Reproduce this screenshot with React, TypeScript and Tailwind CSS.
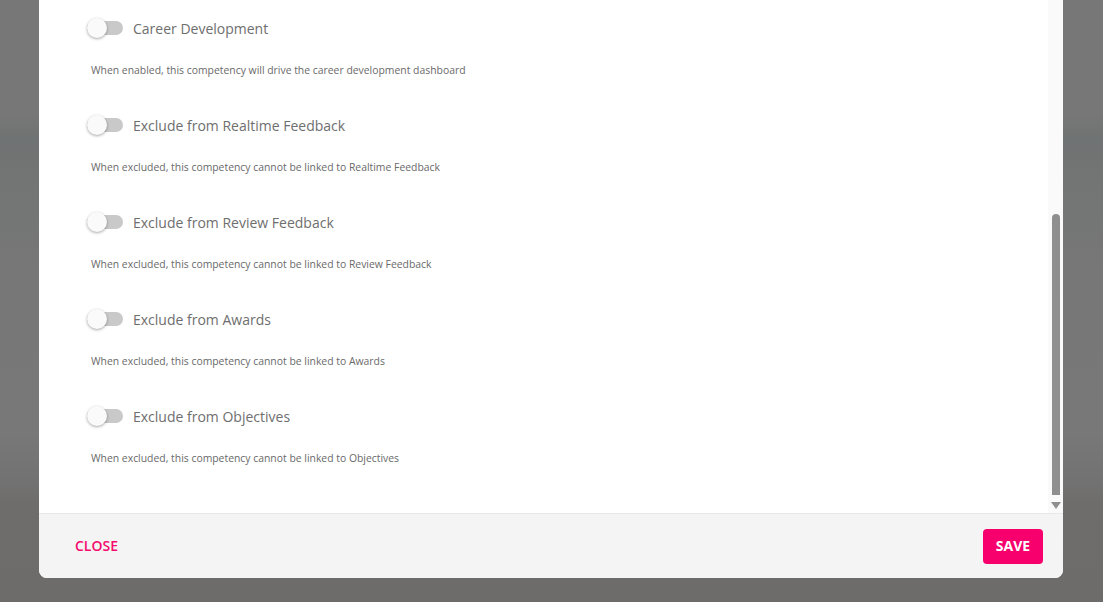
const settings = [
  {
    label: "Career Development",
    description: "When enabled, this competency will drive the career development dashboard",
  },
  {
    label: "Exclude from Realtime Feedback",
    description: "When excluded, this competency cannot be linked to Realtime Feedback",
  },
  {
    label: "Exclude from Review Feedback",
    description: "When excluded, this competency cannot be linked to Review Feedback",
  },
  {
    label: "Exclude from Awards",
    description: "When excluded, this competency cannot be linked to Awards",
  },
  {
    label: "Exclude from Objectives",
    description: "When excluded, this competency cannot be linked to Objectives",
  },
]

function Toggle() {
  return (
    <div className="relative w-9 h-5 flex items-center">
      <div className="w-9 h-[14px] rounded-full bg-[#c9c9c9]"></div>
      <div className="absolute left-0 top-0 w-5 h-5 rounded-full bg-[#fafafa] shadow-[0_1px_3px_rgba(0,0,0,0.35)]"></div>
    </div>
  )
}

export default function App() {
  return (
    <div
      className="w-full h-[602px] flex flex-col pl-[39px] pr-[40px] pb-[24px] bg-[linear-gradient(180deg,#777777_0%,#777777_19%,#707373_23%,#737474_30%,#777777_45%,#787878_72%,#727272_80%,#6e6d6b_84%,#6d6c6a_100%)] overflow-hidden"
      style={{ fontFamily: '"Open Sans", "Noto Sans", sans-serif' }}
    >
      <div className="flex-1 flex flex-col bg-white rounded-b-lg overflow-hidden">
        <div className="flex-1 flex">
          <div className="flex-1 flex flex-col gap-[29px] pt-[10px] pl-[48px]">
            {settings.map((item, index) => (
              <div key={index} className="flex flex-col">
                <div className="h-9 flex items-center">
                  <Toggle />
                  <span className="ml-[10px] text-[14px] text-[#6e6e6e]">{item.label}</span>
                </div>
                <p className="mt-4 ml-1 h-4 leading-4 text-[10.4px] text-[#6a6a6a]">{item.description}</p>
              </div>
            ))}
          </div>
          <div className="w-[15px] bg-[#fafafa] flex flex-col items-center">
            <div className="h-[214px]"></div>
            <div className="w-2 h-[281px] rounded-t-full rounded-b-sm bg-[#8f8f8f]"></div>
            <div className="mt-[7px] w-0 h-0 border-l-[5px] border-r-[5px] border-t-[7px] border-l-transparent border-r-transparent border-t-[#8f8f8f]"></div>
          </div>
        </div>
        <div className="h-[65px] shrink-0 border-t border-[#e8e8e8] bg-[#f4f4f4] flex items-center justify-between pl-[36px] pr-5">
          <button className="text-sm font-semibold text-[#f50a6e]">CLOSE</button>
          <button className="h-[35px] w-[60px] rounded bg-[#f7006d] text-white text-sm font-bold">SAVE</button>
        </div>
      </div>
    </div>
  )
}
